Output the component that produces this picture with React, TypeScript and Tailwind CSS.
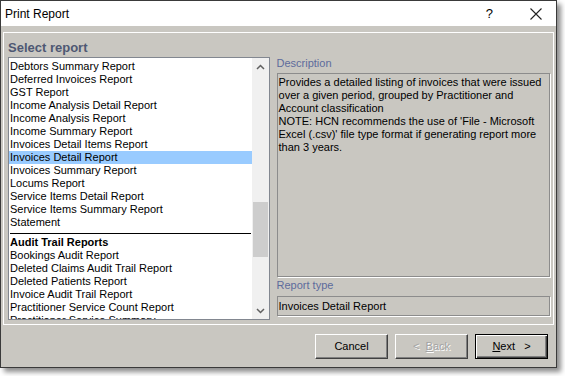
import type { ReactNode } from 'react'

const REPORTS = [
  'Debtors Summary Report',
  'Deferred Invoices Report',
  'GST Report',
  'Income Analysis Detail Report',
  'Income Analysis Report',
  'Income Summary Report',
  'Invoices Detail Items Report',
  'Invoices Detail Report',
  'Invoices Summary Report',
  'Locums Report',
  'Service Items Detail Report',
  'Service Items Summary Report',
  'Statement',
]

const AUDIT_REPORTS = [
  'Bookings Audit Report',
  'Deleted Claims Audit Trail Report',
  'Deleted Patients Report',
  'Invoice Audit Trail Report',
  'Practitioner Service Count Report',
  'Practitioner Service Summary',
]

const SELECTED = 'Invoices Detail Report'

const DESCRIPTION_LINES = [
  'Provides a detailed listing of invoices that were issued',
  'over a given period, grouped by Practitioner and',
  'Account classification',
  "NOTE: HCN recommends the use of 'File - Microsoft",
  "Excel (.csv)' file type format if generating report more",
  'than 3 years.',
]

function ListRow({ label, selected }: { label: string; selected?: boolean }) {
  return (
    <div className={`h-[13px] whitespace-nowrap pl-px leading-[13px] ${selected ? 'bg-[#99cbff]' : ''}`}>{label}</div>
  )
}

function Chevron({ up }: { up?: boolean }) {
  return (
    <svg width="9" height="6" viewBox="0 0 9 6" className="block">
      <path d={up ? 'M1 5 L4.5 1.5 L8 5' : 'M1 1 L4.5 4.5 L8 1'} fill="none" stroke="#606060" strokeWidth="1.5" />
    </svg>
  )
}

function DialogButton({ children, variant = 'normal' }: { children: ReactNode; variant?: 'normal' | 'default' | 'disabled' }) {
  const frame =
    variant === 'default'
      ? 'border-black shadow-[inset_1px_1px_0_#ffffff,inset_-1px_-1px_0_#404040,inset_-2px_-2px_0_#808080]'
      : 'border-t-white border-l-white border-r-[#404040] border-b-[#404040] shadow-[inset_-1px_-1px_0_#808080]'
  const text = variant === 'disabled' ? 'text-[#a3a3a3] [text-shadow:1px_1px_0_#ffffff]' : 'text-black'

  return (
    <div className={`flex h-[25px] w-[73px] items-center justify-center border text-[11px] ${frame} ${text}`}>
      {children}
    </div>
  )
}

export default function App() {
  return (
    <div className="h-[376px] w-[565px] bg-white font-['Liberation_Sans',Arial,sans-serif] text-black">
      <div className="flex h-[368px] w-[557px] flex-col border border-[#3a3a3a] shadow-[4px_4px_5px_rgba(0,0,0,0.45)]">
        {/* title bar */}
        <div className="flex h-[25px] items-center bg-white pl-[4px] text-[12px]">
          <span className="flex-1">Print Report</span>
          <span className="mr-[37px] text-[13px]">?</span>
          <svg width="12" height="12" viewBox="0 0 12 12" className="mr-[14px]">
            <path d="M0.5 0.5 L11.5 11.5 M11.5 0.5 L0.5 11.5" stroke="#222" strokeWidth="1.1" />
          </svg>
        </div>

        <div className="flex flex-1 flex-col bg-[#c9c7c1] px-[2px] pt-[6px]">
          {/* group panel */}
          <div className="flex h-[293px] flex-col border border-white pl-[4px] pr-[3px] pt-[6px]">
            <div className="h-[17px] text-[13px] leading-[17px] font-bold text-[#4e5873]">Select report</div>
            <div className="mt-[1px] flex gap-[7px]">
              {/* report list */}
              <div className="flex h-[263px] w-[262px] border border-[#828790] bg-white text-[11px]">
                <div className="flex-1 overflow-hidden pt-[2px]">
                  {REPORTS.map((r) => (
                    <ListRow key={r} label={r} selected={r === SELECTED} />
                  ))}
                  <div className="mr-px mt-[4px] mb-[2px] ml-px h-px bg-black" />
                  <div className="h-[13px] pl-px leading-[13px] font-bold">Audit Trail Reports</div>
                  {AUDIT_REPORTS.map((r) => (
                    <ListRow key={r} label={r} />
                  ))}
                </div>
                <div className="flex w-[17px] flex-col bg-[#f0f0f0]">
                  <div className="flex h-[17px] items-center justify-center">
                    <Chevron up />
                  </div>
                  <div className="mt-[127px] mx-px h-[55px] bg-[#cdcdcd]" />
                  <div className="flex-1" />
                  <div className="flex h-[17px] items-center justify-center">
                    <Chevron />
                  </div>
                </div>
              </div>

              {/* details */}
              <div className="flex w-[274px] flex-col text-[11px]">
                <div className="h-[13px] leading-[13px] text-[#5d6b9c]">Description</div>
                <div className="mt-[3px] h-[204px] border border-[#8c8c8c] px-px pt-[2px] shadow-[1px_1px_0_#ffffff]">
                  {DESCRIPTION_LINES.map((line) => (
                    <div key={line} className="h-[13px] whitespace-nowrap leading-[13px]">
                      {line}
                    </div>
                  ))}
                </div>
                <div className="mt-[2px] h-[13px] leading-[13px] text-[#5d6b9c]">Report type</div>
                <div className="mt-[4px] flex h-[20px] items-center border border-[#8c8c8c] px-px shadow-[1px_1px_0_#ffffff]">
                  Invoices Detail Report
                </div>
              </div>
            </div>
          </div>

          {/* buttons */}
          <div className="mt-[9px] flex justify-end gap-[7px] pr-[6px]">
            <DialogButton>Cancel</DialogButton>
            <DialogButton variant="disabled">
              &lt;&nbsp;&nbsp;<span className="underline">B</span>ack
            </DialogButton>
            <DialogButton variant="default">
              <span className="underline">N</span>ext&nbsp;&nbsp;&nbsp;&gt;
            </DialogButton>
          </div>
        </div>
      </div>
    </div>
  )
}
